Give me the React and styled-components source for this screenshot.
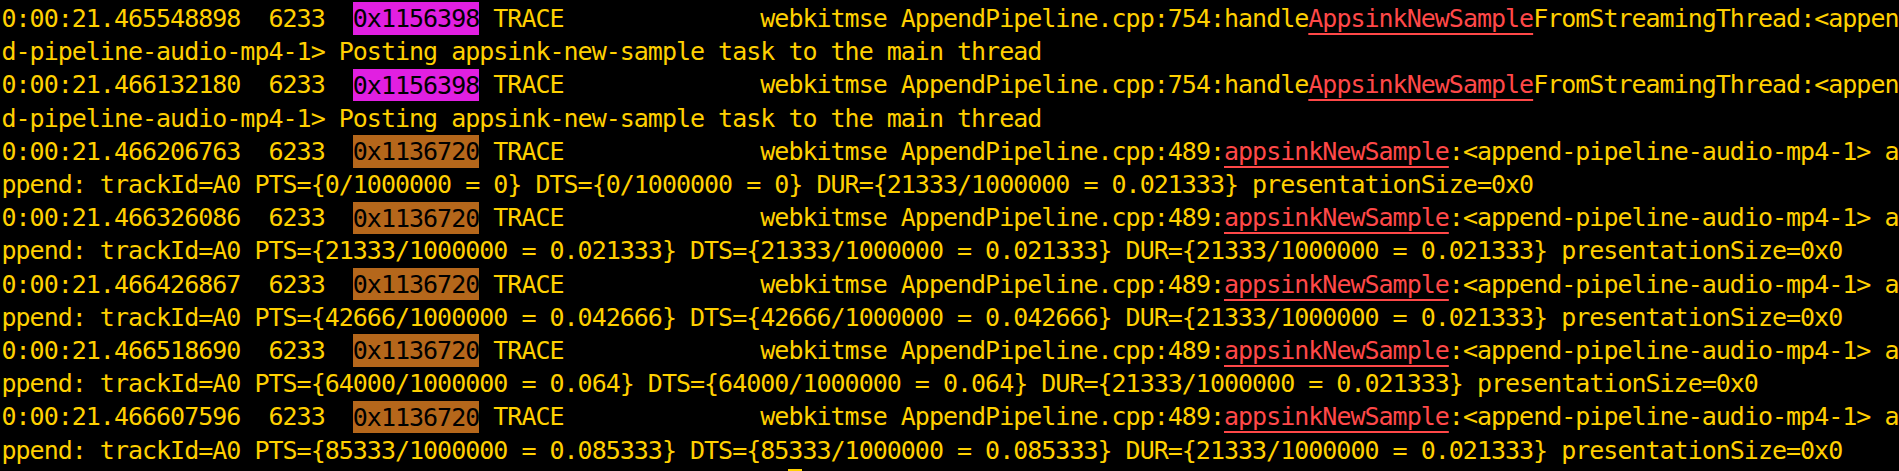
import React from "react";
import styled, { createGlobalStyle } from "styled-components";

const GlobalStyle = createGlobalStyle`
  html, body {
    margin: 0;
    padding: 0;
    background: #000;
    overflow: hidden;
  }
`;

const entries = [
  {
    time: "0:00:21.465548898",
    ptr: "0x1156398",
    tone: "magenta",
    line: 754,
    before: "handle",
    fn: "AppsinkNewSample",
    after: "FromStreamingThread",
    msg: "Posting appsink-new-sample task to the main thread",
  },
  {
    time: "0:00:21.466132180",
    ptr: "0x1156398",
    tone: "magenta",
    line: 754,
    before: "handle",
    fn: "AppsinkNewSample",
    after: "FromStreamingThread",
    msg: "Posting appsink-new-sample task to the main thread",
  },
  { time: "0:00:21.466206763", pts: "0", ptsVal: "0" },
  { time: "0:00:21.466326086", pts: "21333", ptsVal: "0.021333" },
  { time: "0:00:21.466426867", pts: "42666", ptsVal: "0.042666" },
  { time: "0:00:21.466518690", pts: "64000", ptsVal: "0.064" },
  { time: "0:00:21.466607596", pts: "85333", ptsVal: "0.085333" },
].map((e) =>
  e.msg
    ? e
    : {
        ...e,
        ptr: "0x1136720",
        tone: "orange",
        line: 489,
        before: "",
        fn: "appsinkNewSample",
        after: "",
        msg: `append: trackId=A0 PTS={${e.pts}/1000000 = ${e.ptsVal}} DTS={${e.pts}/1000000 = ${e.ptsVal}} DUR={21333/1000000 = 0.021333} presentationSize=0x0`,
      }
);

const Screen = styled.div`
  box-sizing: border-box;
  width: 1900px;
  padding: 2px 0 0 1.5px;
  font-family: "DejaVu Sans Mono", monospace;
  font-size: 25px;
  letter-spacing: -1px;
  line-height: 33.2px;
  color: #ffd000;
  white-space: pre-wrap;
  word-break: break-all;
`;

const Entry = styled.div``;

const Thread = styled.span`
  background: ${(p) => (p.$tone === "magenta" ? "#e11fe1" : "#b5671b")};
  color: #000;
  padding: 1.7px 0;
`;

const Func = styled.span`
  color: #ff4848;
  text-decoration: underline;
  text-decoration-thickness: 2px;
  text-underline-offset: 6px;
`;

const Cursor = styled.span`
  display: inline-block;
  width: 14px;
  height: 30px;
  background: #ffd000;
  vertical-align: top;
  margin-top: 2px;
`;

function LogEntry({ e }) {
  return (
    <Entry>
      {e.time}
      {"  6233  "}
      <Thread $tone={e.tone}>{e.ptr}</Thread>
      {" TRACE              webkitmse AppendPipeline.cpp:"}
      {e.line}:{e.before}
      <Func>{e.fn}</Func>
      {e.after}:{"<append-pipeline-audio-mp4-1> "}
      {e.msg}
    </Entry>
  );
}

export default function App() {
  return (
    <>
      <GlobalStyle />
      <Screen>
        {entries.map((e) => (
          <LogEntry key={e.time} e={e} />
        ))}
        <Entry>
          {" ".repeat(56)}
          <Cursor />
        </Entry>
      </Screen>
    </>
  );
}
